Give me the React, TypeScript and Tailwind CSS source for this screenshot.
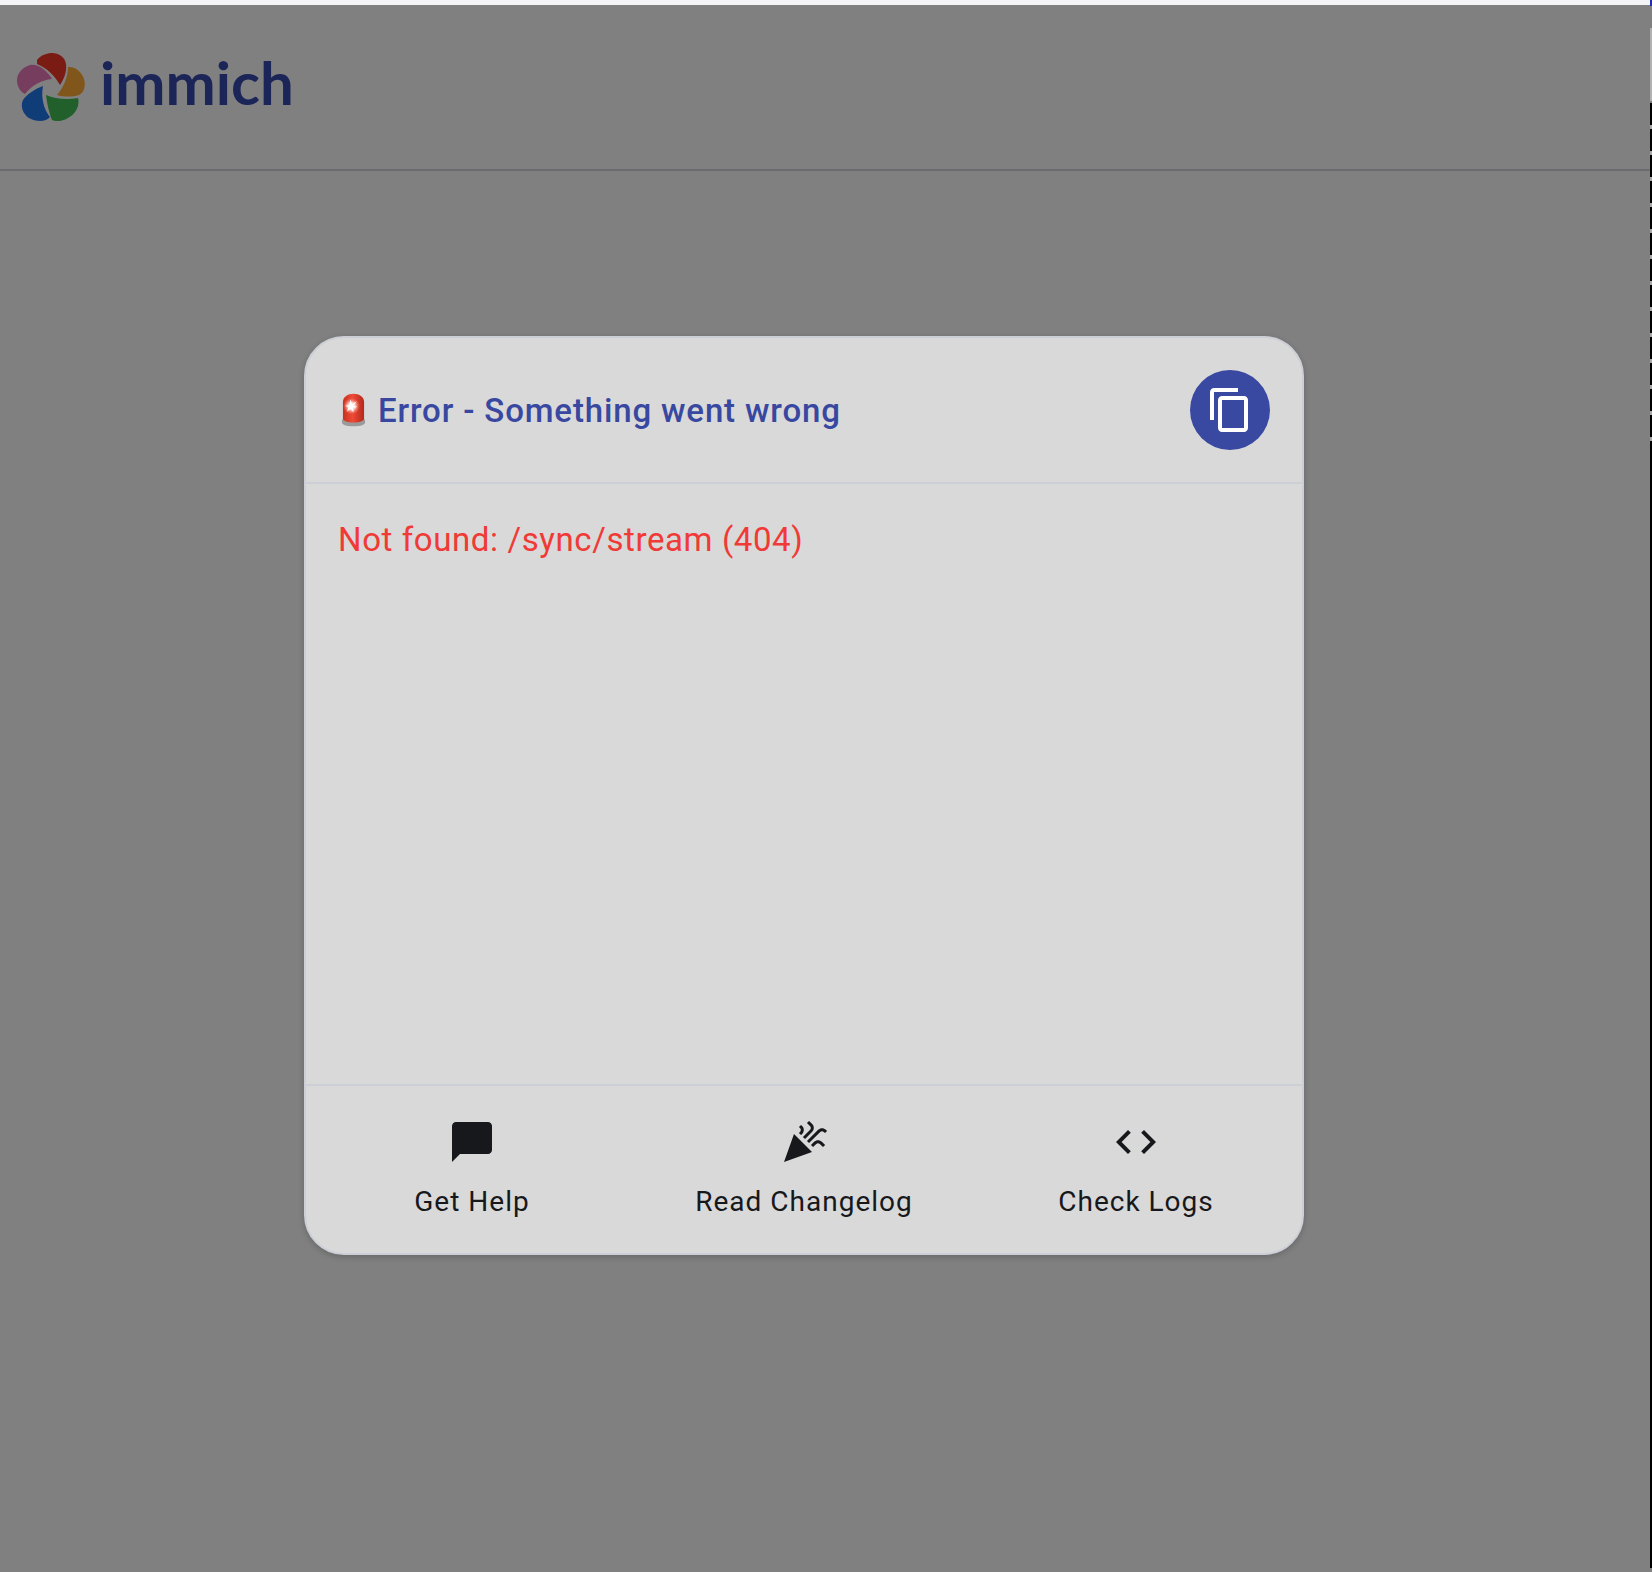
const bodyFont = 'font-["Roboto","Noto_Sans",sans-serif]';

function Logo() {
  return (
    <svg viewBox="0 0 68 68" className="w-[68px] h-[68px] shrink-0">
      <path fill="#7a1c14" d="M20 7C24 2 30 0 35 0C42 0 48 4 49 11C50 19 47 26 43 32C38 23 30 15 20 11Z" />
      <path fill="#80561b" d="M51 14C58 13 65 19 67 26C69 33 67 40 62 42C55 44 47 44 40 42C46 35 51 25 51 14Z" />
      <path fill="#215f2b" d="M29 42C38 46 50 47 61 45C63 52 59 61 51 65C46 68 40 69 35 67C32 60 30 50 29 42Z" />
      <path fill="#103d78" d="M26 33C24 44 26 55 33 64C29 69 19 69 12 65C6 61 3 53 6 47C10 41 18 36 26 33Z" />
      <path fill="#763d5e" d="M13 12C17 11 22 13 25 15C29 18 33 22 35 26C25 27 15 32 8 41C3 39 0 33 0 27C0 20 6 14 13 12Z" />
    </svg>
  );
}

function Siren() {
  return (
    <svg viewBox="0 0 26 34" className="w-[25px] h-[34px] shrink-0 ml-[3px]">
      <defs>
        <linearGradient id="sirenBody" x1="0" y1="0" x2="1" y2="0">
          <stop offset="0%" stopColor="#c8301f" />
          <stop offset="45%" stopColor="#ee4a36" />
          <stop offset="100%" stopColor="#b5281a" />
        </linearGradient>
        <radialGradient id="sirenFlash" cx="50%" cy="50%" r="50%">
          <stop offset="0%" stopColor="#ffffff" />
          <stop offset="45%" stopColor="#ffd9d0" stopOpacity="0.9" />
          <stop offset="100%" stopColor="#f2604f" stopOpacity="0" />
        </radialGradient>
      </defs>
      <path fill="#9a9a9a" d="M1 27h24v3c0 2-4 4-12 4S1 32 1 30z" />
      <path fill="url(#sirenBody)" d="M2 9C2 3 7 0 13 0s11 3 11 9v17c0 2-5 4-11 4S2 28 2 26z" />
      <ellipse cx="11" cy="13" rx="9" ry="9" fill="url(#sirenFlash)" />
      <path fill="#ffffff" d="M10 6l1.500 5 5-3-3.500 4.500 4 1.500-4.500 .7 .5 5-3-4-4 3 2-4.500-4-1.700 4.500-.5z" />
    </svg>
  );
}

function FooterAction({ label, path }: { label: string; path: string }) {
  return (
    <div className="flex-1 flex flex-col items-center">
      <svg viewBox="0 0 24 24" className="w-12 h-12 fill-[#17181c]">
        <path d={path} />
      </svg>
      <span className={`${bodyFont} mt-[16px] text-[28px] leading-[40px] tracking-[1px] text-[#17181c]`}>{label}</span>
    </div>
  );
}

export default function App() {
  return (
    <div className="relative min-h-[1572px] bg-[#808080] pt-[5px] overflow-hidden">
      {/* top sliver of the window and the stray right edge of the capture */}
      <div className="absolute top-0 left-0 right-0 h-[5px] bg-[#f4f4f6]" />
      <div className="absolute top-0 right-0 w-[2px] h-[6px] bg-[#1f2fb0]" />
      <div className="absolute top-[28px] right-0 w-[2px] h-[73px] bg-[#b0b0b0]" />
      <div className="absolute top-[103px] right-0 w-[2px] h-[355px] bg-[repeating-linear-gradient(to_bottom,#000_0,#000_22px,#a8a8a8_22px,#a8a8a8_26px)]" />
      <div className="absolute top-[458px] bottom-[4px] right-0 w-[2px] bg-black" />

      <header className="h-[166px] flex items-center pl-[17px] border-b-2 border-[#6b6b6f]">
        <div className="flex items-center gap-[15px] -mt-[1px]">
          <Logo />
          <span className='font-["Lato",sans-serif] font-bold text-[60px] leading-none text-[#1b2558] -mt-[10px]'>immich</span>
        </div>
      </header>

      <main className="flex justify-center pt-[165px]">
        <div className="w-[1000px] h-[919px] ml-[-44px] rounded-[40px] border-2 border-[#ccd0d6] bg-[#d9d9d9] flex flex-col shadow-[0_2px_6px_rgba(0,0,0,0.2)]">
          <div className="h-[146px] flex items-center justify-between px-[32px] border-b-2 border-[#ccd0d6]">
            <div className="flex items-center gap-[12px]">
              <Siren />
              <span className={`${bodyFont} font-medium text-[33px] leading-none tracking-[0.85px] text-[#3848a0]`}>Error - Something went wrong</span>
            </div>
            <div className="w-20 h-20 rounded-full bg-[#3949a1] flex items-center justify-center">
              <svg viewBox="0 0 24 24" className="w-12 h-12 fill-white">
                <path d="M16 1H4c-1.100 0-2 .9-2 2v14h2V3h12V1zm3 4H8c-1.100 0-2 .9-2 2v14c0 1.100.9 2 2 2h11c1.100 0 2-.9 2-2V7c0-1.100-.9-2-2-2zm0 16H8V7h11v14z" />
              </svg>
            </div>
          </div>

          <div className="h-[602px] border-b-2 border-[#ccd0d6] px-[32px] pt-[36px]">
            <p className={`${bodyFont} text-[33px] leading-[40px] tracking-[0.6px] text-[#f03a36]`}>Not found: /sync/stream (404)</p>
          </div>

          <div className="flex pt-[32px]">
            <FooterAction label="Get Help" path="M20 2H4c-1.100 0-2 .9-2 2v18l4-4h14c1.100 0 2-.9 2-2V4c0-1.100-.9-2-2-2z" />
            <FooterAction label="Read Changelog" path="M2 22l14-5-9-9zm12.530-9.470 5.590-5.590c.49-.49 1.280-.49 1.770 0l.59.59 1.060-1.060-.59-.59c-1.070-1.070-2.820-1.070-3.890 0l-5.590 5.590 1.060 1.060zm-4.470-5.650-.59.59 1.060 1.060.59-.59c1.070-1.070 1.070-2.820 0-3.890l-.59-.59-1.060 1.050.59.59c.48.48.48 1.280 0 1.780zm7 5-1.590 1.590 1.060 1.060 1.590-1.590c.49-.49 1.280-.49 1.770 0l1.610 1.610 1.060-1.060-1.610-1.610c-1.080-1.070-2.820-1.070-3.890 0zm-2-6-3.590 3.580 1.060 1.060 3.590-3.590c1.070-1.070 1.070-2.820 0-3.890l-1.590-1.590-1.060 1.060 1.590 1.590c.48.49.48 1.290 0 1.780z" />
            <FooterAction label="Check Logs" path="M9.400 16.600L4.800 12l4.600-4.600L8 6l-6 6 6 6 1.400-1.400zm5.200 0l4.600-4.600-4.600-4.600L16 6l6 6-6 6-1.400-1.400z" />
          </div>
        </div>
      </main>
    </div>
  );
}
